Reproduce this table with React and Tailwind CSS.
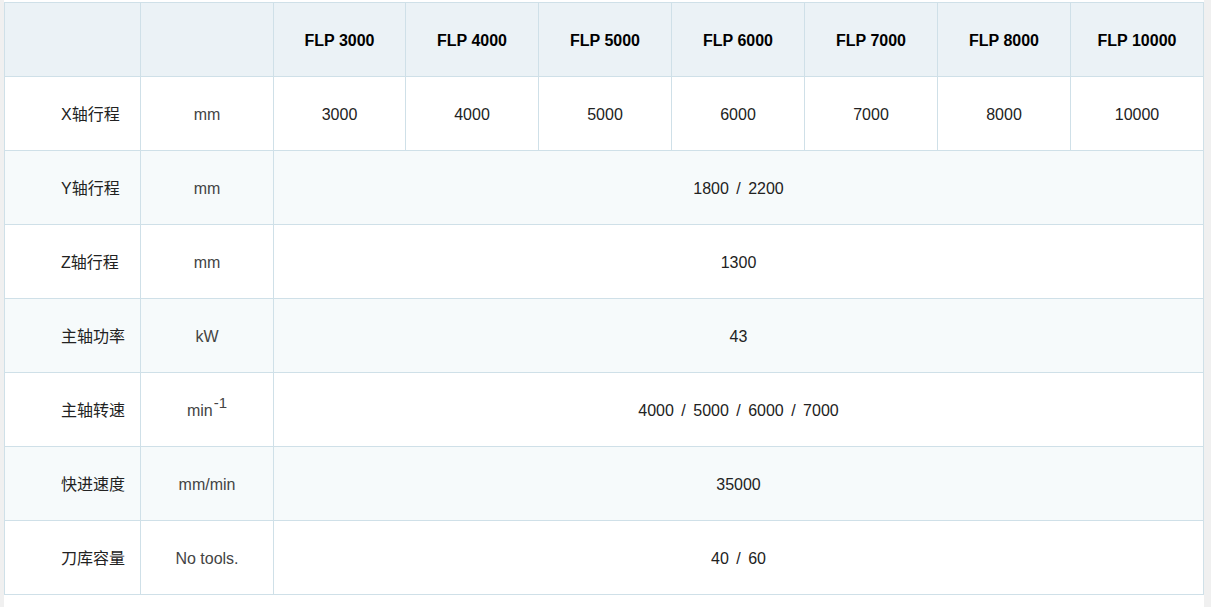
const models = ['FLP 3000', 'FLP 4000', 'FLP 5000', 'FLP 6000', 'FLP 7000', 'FLP 8000', 'FLP 10000'];
const xTravel = ['3000', '4000', '5000', '6000', '7000', '8000', '10000'];

const rows = [
  { label: 'Y轴行程', unit: 'mm', value: '1800 / 2200' },
  { label: 'Z轴行程', unit: 'mm', value: '1300' },
  { label: '主轴功率', unit: 'kW', value: '43' },
  { label: '主轴转速', unit: <>min<sup className="text-[15px] relative -top-[8px] ml-[1px]">-1</sup></>, value: '4000 / 5000 / 6000 / 7000' },
  { label: '快进速度', unit: 'mm/min', value: '35000' },
  { label: '刀库容量', unit: 'No tools.', value: '40 / 60' },
];

const cell = 'border border-[#cfe0e8] h-[74px] pt-[2px] text-center align-middle';

export default function App() {
  return (
    <div className="min-h-screen bg-[#f0f0f0] pl-[4px] pr-[7px]" style={{ fontFamily: '"Liberation Sans", "Noto Sans CJK SC", Arial, sans-serif' }}>
      <div className="bg-white w-[1200px] min-h-[607px] pt-[2px]">
        <table className="table-fixed border-collapse w-[1199px] text-[16px] text-[#222]">
          <colgroup>
            <col className="w-[136px]" />
            <col className="w-[133px]" />
            <col className="w-[132px]" />
            {models.slice(1).map((m) => <col key={m} className="w-[133px]" />)}
          </colgroup>
          <thead>
            <tr className="bg-[#ebf2f6]">
              <th className={cell}></th>
              <th className={cell}></th>
              {models.map((m) => (
                <th key={m} className={`${cell} font-bold text-black`}>{m}</th>
              ))}
            </tr>
          </thead>
          <tbody>
            <tr className="bg-white">
              <td className={`${cell} !text-left pl-[56px]`}>X轴行程</td>
              <td className={`${cell} text-[#444]`}>mm</td>
              {xTravel.map((v) => (
                <td key={v} className={cell}>{v}</td>
              ))}
            </tr>
            {rows.map((r, i) => (
              <tr key={r.label} className={i % 2 === 0 ? 'bg-[#f6fafb]' : 'bg-white'}>
                <td className={`${cell} !text-left pl-[56px]`}>{r.label}</td>
                <td className={`${cell} text-[#444]`}>{r.unit}</td>
                <td colSpan={7} className={`${cell} [word-spacing:3px]`}>{r.value}</td>
              </tr>
            ))}
          </tbody>
        </table>
      </div>
    </div>
  );
}
